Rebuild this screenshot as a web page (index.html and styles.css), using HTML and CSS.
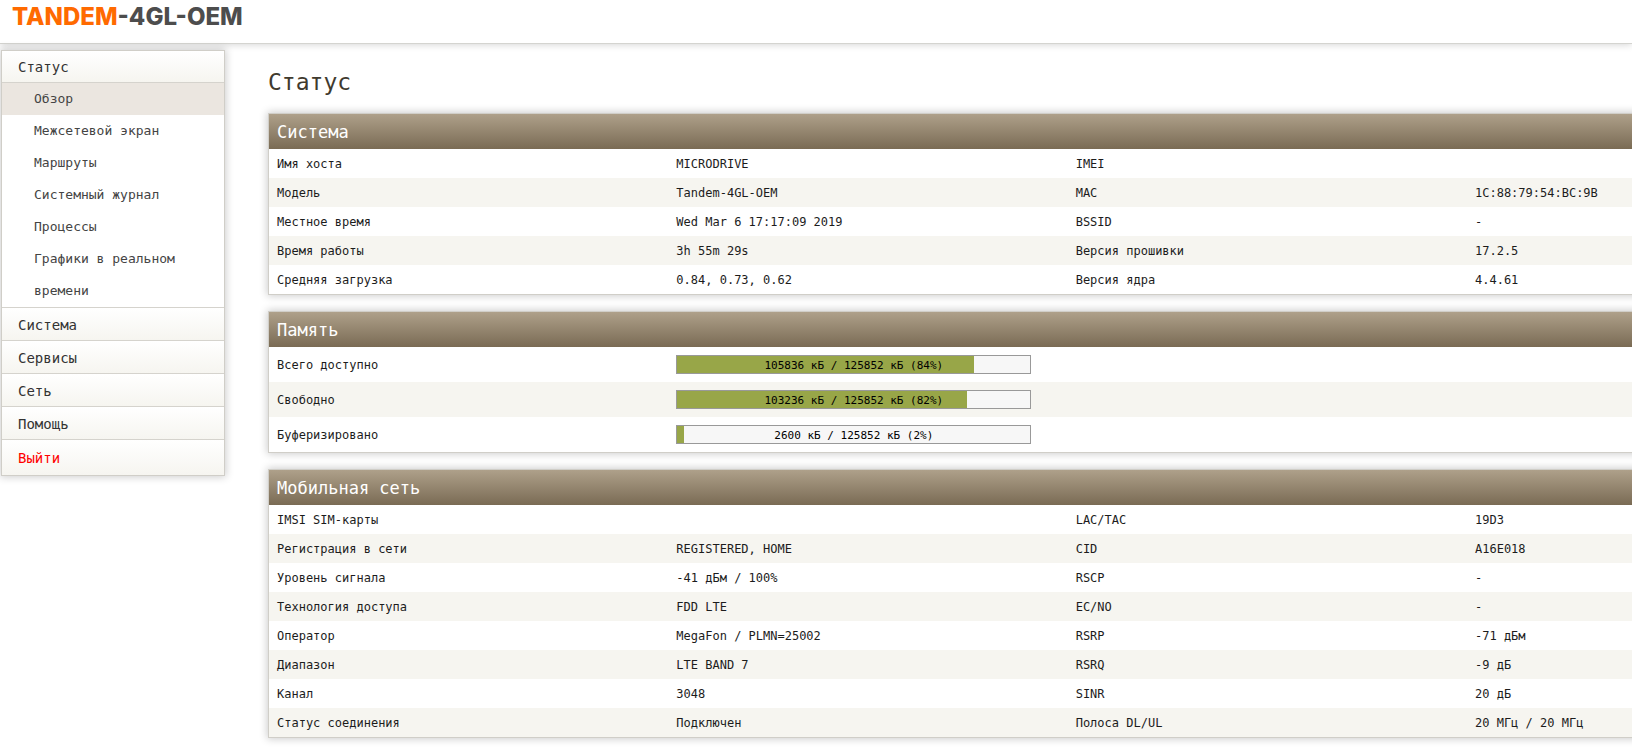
FILE: index.html
```html
<!DOCTYPE html>
<html lang="ru">
<head>
<meta charset="utf-8">
<title>Tandem-4GL-OEM</title>
<link rel="stylesheet" href="styles.css">
</head>
<body>
<header class="topbar">
  <a class="brand" href="#"><span class="brand-accent">TANDEM</span>-4GL-OEM</a>
</header>
<div class="layout">
  <nav class="menu">
    <a class="menu-head menu-first" href="#">Статус</a>
    <ul class="submenu">
      <li><a class="active" href="#">Обзор</a></li>
      <li><a href="#">Межсетевой экран</a></li>
      <li><a href="#">Маршруты</a></li>
      <li><a href="#">Системный журнал</a></li>
      <li><a href="#">Процессы</a></li>
      <li><a href="#">Графики в реальном времени</a></li>
    </ul>
    <a class="menu-head" href="#">Система</a>
    <a class="menu-head" href="#">Сервисы</a>
    <a class="menu-head" href="#">Сеть</a>
    <a class="menu-head" href="#">Помощь</a>
    <a class="menu-head logout" href="#">Выйти</a>
  </nav>
  <main class="content">
    <h1>Статус</h1>
    <section class="panel">
      <h2>Система</h2>
      <table>
        <tr><th scope="row">Имя хоста</th><td>MICRODRIVE</td><th scope="row">IMEI</th><td></td></tr>
        <tr><th scope="row">Модель</th><td>Tandem-4GL-OEM</td><th scope="row">MAC</th><td>1C:88:79:54:BC:9B</td></tr>
        <tr><th scope="row">Местное время</th><td>Wed Mar 6 17:17:09 2019</td><th scope="row">BSSID</th><td>-</td></tr>
        <tr><th scope="row">Время работы</th><td>3h 55m 29s</td><th scope="row">Версия прошивки</th><td>17.2.5</td></tr>
        <tr><th scope="row">Средняя загрузка</th><td>0.84, 0.73, 0.62</td><th scope="row">Версия ядра</th><td>4.4.61</td></tr>
      </table>
    </section>
    <section class="panel">
      <h2>Память</h2>
      <table class="usage">
        <tr><th scope="row">Всего доступно</th><td><div class="bar"><div class="fill" style="width:84%"></div><span>105836 кБ / 125852 кБ (84%)</span></div></td><td></td><td></td></tr>
        <tr><th scope="row">Свободно</th><td><div class="bar"><div class="fill" style="width:82%"></div><span>103236 кБ / 125852 кБ (82%)</span></div></td><td></td><td></td></tr>
        <tr><th scope="row">Буферизировано</th><td><div class="bar"><div class="fill" style="width:2%"></div><span>2600 кБ / 125852 кБ (2%)</span></div></td><td></td><td></td></tr>
      </table>
    </section>
    <section class="panel">
      <h2>Мобильная сеть</h2>
      <table>
        <tr><th scope="row">IMSI SIM-карты</th><td></td><th scope="row">LAC/TAC</th><td>19D3</td></tr>
        <tr><th scope="row">Регистрация в сети</th><td>REGISTERED, HOME</td><th scope="row">CID</th><td>A16E018</td></tr>
        <tr><th scope="row">Уровень сигнала</th><td>-41 дБм / 100%</td><th scope="row">RSCP</th><td>-</td></tr>
        <tr><th scope="row">Технология доступа</th><td>FDD LTE</td><th scope="row">EC/NO</th><td>-</td></tr>
        <tr><th scope="row">Оператор</th><td>MegaFon / PLMN=25002</td><th scope="row">RSRP</th><td>-71 дБм</td></tr>
        <tr><th scope="row">Диапазон</th><td>LTE BAND 7</td><th scope="row">RSRQ</th><td>-9 дБ</td></tr>
        <tr><th scope="row">Канал</th><td>3048</td><th scope="row">SINR</th><td>20 дБ</td></tr>
        <tr><th scope="row">Статус соединения</th><td>Подключен</td><th scope="row">Полоса DL/UL</th><td>20 МГц / 20 МГц</td></tr>
      </table>
    </section>
  </main>
</div>
</body>
</html>
```

FILE: styles.css
```css
* { box-sizing: border-box; }
body {
  margin: 0;
  overflow: hidden;
  background: #fff;
  color: #1c1c1c;
  font-family: "DejaVu Sans Mono", "Liberation Mono", monospace;
  font-size: 12px;
}
a { color: inherit; text-decoration: none; }
.topbar {
  padding: 2px 12px 12px;
  border-bottom: 1px solid #d4d4d0;
  box-shadow: 0 0 8px rgba(0, 0, 0, 0.2);
}
.brand {
  display: block;
  color: #4d4d4d;
  font-family: Inter, Roboto, sans-serif;
  font-size: 24px;
  font-weight: 800;
  line-height: 29px;
}
.brand-accent { color: #ff6a00; }
.layout { display: flex; align-items: flex-start; }
.menu {
  flex: 0 0 224px;
  margin: 6px 0 0 1px;
  border: 1px solid #d0cec8;
  background: #fff;
  box-shadow: 0 0 8px 1px rgba(0, 0, 0, 0.2);
}
.menu-head {
  display: block;
  padding-top: 2px;
  padding-left: 16px;
  border-top: 1px solid #d5d3cd;
  background: linear-gradient(#fff, #f6f5f0);
  color: #333;
  font-size: 14px;
  line-height: 30px;
}
.menu-first { border-top: 0; border-bottom: 1px solid #d5d3cd; line-height: 29px; }
.logout { color: #f00; line-height: 33px; }
.submenu { margin: 0; padding: 0; list-style: none; }
.submenu a {
  display: block;
  padding: 0 32px;
  color: #444;
  font-size: 13px;
  line-height: 32px;
}
.submenu .active { background: #ebe6e0; }
.content { flex: 0 0 98vw; margin-left: 43px; }
h1 {
  margin: 22px 0 15px;
  color: #403a2e;
  font-size: 23px;
  font-weight: 400;
  line-height: 32px;
}
.panel {
  margin-bottom: 16px;
  border: 1px solid #d0cec8;
  background: #fff;
  box-shadow: 0 0 8px 1px rgba(0, 0, 0, 0.2);
}
h2 {
  margin: 0;
  padding: 2px 8px 0;
  background: linear-gradient(#aea08a, #7a6b54);
  color: #fff;
  font-size: 17px;
  font-weight: 400;
  line-height: 33px;
}
table { width: 100%; table-layout: fixed; border-collapse: collapse; }
tr:nth-child(even) { background: #f6f5f0; }
th, td {
  padding: 2px 8px 0;
  font-weight: 400;
  line-height: 27px;
  text-align: left;
}
.usage td { padding: 8px; }
.bar {
  display: grid;
  width: 355px;
  height: 19px;
  border: 1px solid #999;
  background: #f7f7f7;
  color: #000;
  font-size: 11px;
  line-height: 19px;
  text-align: center;
}
.bar > * { grid-area: 1 / 1; }
.fill { background: #98a648; height: 17px; }
```
